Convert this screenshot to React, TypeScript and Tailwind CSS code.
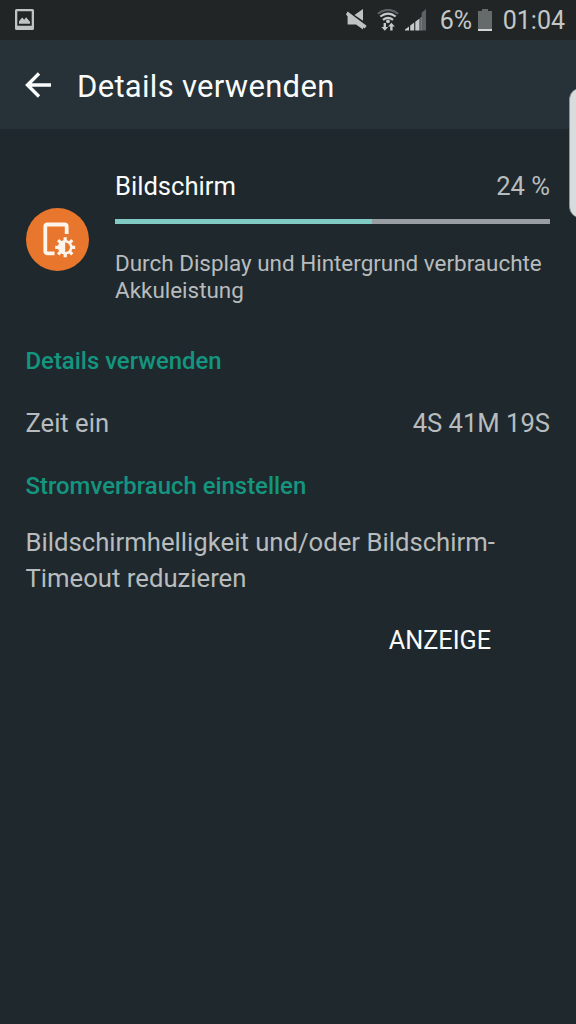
import type { ReactNode } from "react";

function StatusBar() {
  return (
    <div className="flex h-10 items-center bg-[#212526] pl-[15px] pr-3 text-[#c3c7c8]">
      {/* Screenshot notification */}
      <svg className="mt-[-1px] h-[21px] w-[19px] shrink-0" viewBox="0 0 19 21">
        <path
          fill="#c0c3c3"
          fillRule="evenodd"
          d="M1.5 0h16A1.5 1.5 0 0 1 19 1.5v18a1.5 1.5 0 0 1-1.5 1.5h-16A1.5 1.5 0 0 1 0 19.5v-18A1.5 1.5 0 0 1 1.5 0ZM2.3 2.2v14.6h14.4V2.2Z"
        />
        <path fill="#c0c3c3" d="M4 14.8v-2.600l3.200-3.700 2 2.200 1.900-2.400 3.900 4.400v2.100Z" />
      </svg>

      <div className="ml-auto flex items-center">
        {/* Muted speaker */}
        <svg className="h-[22px] w-[21px]" viewBox="0 0 21 22" fill="#bfc3c3">
          <path d="M8.500 6 17 0v11.700Z" />
          <path d="M1.600 2.600 20.600 16.800 18.800 19.600 17 18.500V20.600L10 15.500H1.600V7.500L0 5.300Z" />
        </svg>
        <svg className="ml-[10px] h-[22px] w-[22px]" viewBox="0 0 22 22" fill="none">
          <path stroke="#5d6364" strokeWidth="2" d="M.8 4.700Q11-3 21.200 4.700" />
          <path stroke="#c6caca" strokeWidth="2.200" d="M3.300 7.500Q11 1.600 18.700 7.500M6 10.900Q11 7 16 10.900" />
          <circle cx="11" cy="12.300" r="1.900" fill="#c6caca" />
          <path fill="#c6caca" d="M6.600 14h2.400v4h2.200L7.800 21.800 4.400 18h2.200ZM13.200 21.500v-4H11l3.400-3.800 3.400 3.800h-2.200v4Z" />
        </svg>
        <svg className="ml-[6px] h-[22px] w-[22px]" viewBox="0 0 22 22" fill="#c6caca">
          <path d="M0 21.500v-1L4 17.500v4ZM5.200 21.500v-4.900l4-3.100v8ZM10.300 21.500v-8.800l4.200-3.300v12.100ZM15.600 21.500V8.500l1-.8v13.800Z" />
          <path fill="#5d6364" d="M16.600 21.500V3.800L21 0v21.500Z" />
        </svg>
        <span className="ml-[13px] mt-0.5 w-[38px] text-[25px] leading-10">6%</span>
        <svg className="h-[22px] w-[14px]" viewBox="0 0 14 22">
          <path fill="#656a6b" d="M4 0h6v2h4v18H0V2h4Z" />
          <path fill="#d0d3d3" d="M0 20h14v2H0z" />
        </svg>
        <span className="-mr-px ml-[11px] mt-0.5 text-[25px] leading-10">01:04</span>
      </div>
    </div>
  );
}

function AppBar() {
  return (
    <header className="flex h-[89px] items-center bg-[#263238] pl-[25px] text-[#fafcfc]">
      <svg className="h-[26px] w-[27px]" viewBox="0 0 27 26" fill="none" stroke="currentColor" strokeWidth="3.400">
        <path d="M26 13H3M14 1.500 2.500 13 14 24.500" />
      </svg>
      <h1 className="ml-[25px] mt-1 text-[31px] leading-9 tracking-[0.3px]">Details verwenden</h1>
    </header>
  );
}

function DisplayIcon() {
  return (
    <svg className="mt-[38px] h-[63px] w-[63px] shrink-0" viewBox="0 0 63 63">
      <circle cx="31.500" cy="31.500" r="31.500" fill="#e8762c" />
      <path
        fill="none"
        stroke="#fdf4ec"
        strokeWidth="3.800"
        d="M28.500 45.300H21.500a2.200 2.200 0 0 1-2.200-2.200V18.700a2.200 2.200 0 0 1 2.200-2.200h17a2.200 2.200 0 0 1 2.200 2.200V26"
      />
      {/* Brightness gear */}
      <g stroke="#fdf4ec" strokeWidth="3.200">
        <path d="M39.200 29.300v20M29.200 39.300h20M32.100 32.200l14.200 14.200M46.300 32.200 32.100 46.400" />
      </g>
      <circle cx="39.200" cy="39.300" r="7.300" fill="#fdf4ec" />
      <path fill="#e8762c" d="M39.200 34.500a4.800 4.800 0 0 1 0 9.600Z" />
    </svg>
  );
}

function SectionTitle({ children }: { children: ReactNode }) {
  return <h2 className="text-[23.900px] font-medium leading-8 text-[#14957f]">{children}</h2>;
}

export default function App() {
  return (
    <div
      className="relative flex h-[1024px] w-[576px] flex-col overflow-hidden bg-[#1f292d] text-[#b8bcbe]"
      style={{ fontFamily: 'Roboto, "Liberation Sans", sans-serif' }}
    >
      <StatusBar />
      <AppBar />

      <main className="pl-[25.500px] pr-[26px] pt-[41px]">
        <section className="flex gap-[26px] pl-[0.500px]">
          <DisplayIcon />
          <div className="flex-1">
            <div className="flex justify-between text-[25.600px] leading-8">
              <span className="text-[#fafcfc]">Bildschirm</span>
              <span>24 %</span>
            </div>
            <div className="mt-[17px] h-[5px] bg-[#999ea3]">
              <div className="h-full w-[59%] bg-[#80cbc4]" />
            </div>
            <p className="mt-[26px] whitespace-nowrap text-[22.450px] leading-[26.500px]">
              Durch Display und Hintergrund verbrauchte
              <br />
              Akkuleistung
            </p>
          </div>
        </section>

        <section className="mt-[42px]">
          <SectionTitle>Details verwenden</SectionTitle>
          <div className="mt-[30px] flex justify-between text-[25.600px] leading-8">
            <span>Zeit ein</span>
            <span>4S 41M 19S</span>
          </div>
        </section>

        <section className="mt-[31px]">
          <SectionTitle>Stromverbrauch einstellen</SectionTitle>
          <p className="mt-[22px] whitespace-nowrap text-[25.700px] leading-[36.400px]">
            Bildschirmhelligkeit und/oder Bildschirm-
            <br />
            Timeout reduzieren
          </p>
          <div className="mt-[28px] flex justify-end pr-[59px]">
            <button className="text-[25.200px] leading-8 text-[#fafcfc]">ANZEIGE</button>
          </div>
        </section>
      </main>

      {/* Edge panel handle */}
      <div className="absolute left-[569px] top-[88px] h-[130px] w-5 rounded-l-[12px] border-l border-[#8d9294] bg-[#d9dcdc]" />
    </div>
  );
}
